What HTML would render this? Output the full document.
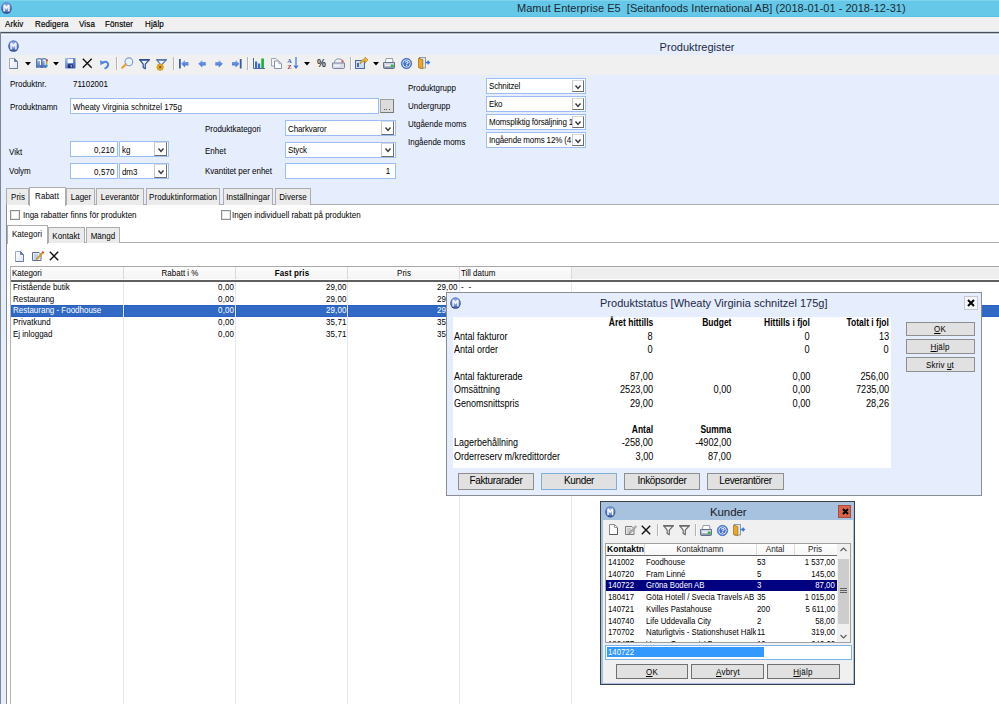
<!DOCTYPE html><html><head><meta charset="utf-8"><style>
html,body{margin:0;padding:0;width:999px;height:704px;overflow:hidden;background:#e6edfd;}
body{position:relative;font-family:"Liberation Sans", sans-serif;}
.t{position:absolute;line-height:1;white-space:pre;}
.r{position:absolute;box-sizing:border-box;}
svg{position:absolute;overflow:visible;}
</style></head><body>
<div class="r" style="left:0px;top:0px;width:999px;height:17px;background:#66c8e8;"></div>
<div class="r" style="left:0px;top:0px;width:999px;height:1px;background:#7fd2ee;"></div>
<div class="r" style="left:0px;top:16px;width:999px;height:1px;background:#58c2e6;"></div>
<svg style="left:1.0px;top:1.9499999999999993px" width="11.0" height="12.100000000000001" viewBox="0 0 20 22"><defs><radialGradient id="mg" cx="50%" cy="40%" r="60%"><stop offset="0" stop-color="#c8d8f4"/><stop offset="0.6" stop-color="#5f82c8"/><stop offset="1" stop-color="#22357e"/></radialGradient></defs><ellipse cx="10" cy="11" rx="9.6" ry="10.6" fill="url(#mg)"/><path d="M4.3 17.5 V7 Q4.3 4.2 7 4.5 L10 9.5 L13 4.5 Q15.7 4.2 15.7 7 V17.5 H13 V9.5 L10 13.5 L7 9.5 V17.5 Z" fill="#f4f7fd"/></svg>
<div class="t" style="left:517.00px;top:3.00px;font-size:11px;letter-spacing:0.02px;color:#1b2a33;">Mamut Enterprise E5  [Seitanfoods International AB] (2018-01-01 - 2018-12-31)</div>
<div class="r" style="left:0px;top:17px;width:999px;height:15px;background:#f0f0f0;"></div>
<div class="t" style="left:4.50px;top:19.00px;font-size:9.5px;letter-spacing:0.1785714285714286px;color:#000;transform:scaleX(0.84);transform-origin:left 0;-webkit-text-stroke:0.2px #000;">Arkiv</div>
<div class="t" style="left:34.80px;top:19.00px;font-size:9.5px;letter-spacing:0.1785714285714286px;color:#000;transform:scaleX(0.84);transform-origin:left 0;-webkit-text-stroke:0.2px #000;">Redigera</div>
<div class="t" style="left:79.30px;top:19.00px;font-size:9.5px;letter-spacing:0.1785714285714286px;color:#000;transform:scaleX(0.84);transform-origin:left 0;-webkit-text-stroke:0.2px #000;">Visa</div>
<div class="t" style="left:105.40px;top:19.00px;font-size:9.5px;letter-spacing:0.1785714285714286px;color:#000;transform:scaleX(0.84);transform-origin:left 0;-webkit-text-stroke:0.2px #000;">Fönster</div>
<div class="t" style="left:145.00px;top:19.00px;font-size:9.5px;letter-spacing:0.1785714285714286px;color:#000;transform:scaleX(0.84);transform-origin:left 0;-webkit-text-stroke:0.2px #000;">Hjälp</div>
<div class="r" style="left:0px;top:31px;width:999px;height:1px;background:#cfdde6;"></div>
<div class="r" style="left:0px;top:32px;width:999px;height:1px;background:#44525c;"></div>
<div class="r" style="left:0px;top:33px;width:999px;height:1px;background:#b4bcc6;"></div>
<div class="r" style="left:0px;top:34px;width:999px;height:1px;background:#f4fbff;"></div>
<div class="r" style="left:0px;top:32px;width:1px;height:672px;background:#7c8894;"></div>
<svg style="left:7.5px;top:40.45px" width="11.0" height="12.100000000000001" viewBox="0 0 20 22"><defs><radialGradient id="mg" cx="50%" cy="40%" r="60%"><stop offset="0" stop-color="#c8d8f4"/><stop offset="0.6" stop-color="#5f82c8"/><stop offset="1" stop-color="#22357e"/></radialGradient></defs><ellipse cx="10" cy="11" rx="9.6" ry="10.6" fill="url(#mg)"/><path d="M4.3 17.5 V7 Q4.3 4.2 7 4.5 L10 9.5 L13 4.5 Q15.7 4.2 15.7 7 V17.5 H13 V9.5 L10 13.5 L7 9.5 V17.5 Z" fill="#f4f7fd"/></svg>
<div class="t" style="left:659.60px;top:42.00px;font-size:11px;letter-spacing:0.02px;color:#1b2a44;">Produktregister</div>
<div class="r" style="left:6px;top:55px;width:993px;height:20px;background:#f0f0f0;"></div>
<svg style="left:9px;top:58px" width="10" height="11" viewBox="0 0 10 11"><defs><linearGradient id="nd" x1="0" y1="0" x2="1" y2="1"><stop offset="0" stop-color="#ffffff"/><stop offset="1" stop-color="#dfe6f2"/></linearGradient></defs><path d="M0.5 0.5 H5.5 L8.5 3.5 V10.5 H0.5 Z" fill="url(#nd)" stroke="#9aabc6"/><path d="M5.5 0.5 V3.5 H8.5 Z" fill="#6a80a8" stroke="#5a7098" stroke-width="0.8"/><path d="M0.5 10.5 H8.5 V4" fill="none" stroke="#6b7d9b"/></svg>
<svg style="left:25px;top:62px" width="6" height="4" viewBox="0 0 6 4"><path d="M0 0 H6 L3 3.5 Z" fill="#000"/></svg>
<svg style="left:36px;top:58px" width="12" height="10" viewBox="0 0 12 10"><defs><linearGradient id="bk" x1="0" y1="0" x2="0" y2="1"><stop offset="0" stop-color="#b9cdf0"/><stop offset="1" stop-color="#4a6cb8"/></linearGradient></defs><path d="M0.5 1 Q3 0 5.8 1 V9.5 Q3 8.7 0.5 9.5 Z" fill="url(#bk)" stroke="#3e5fa0" stroke-width="0.8"/><path d="M5.8 1 Q8 0 10.3 1 V9.5 Q8 8.7 5.8 9.5 Z" fill="url(#bk)" stroke="#3e5fa0" stroke-width="0.8"/><path d="M2 2.5 Q3 2 4.5 2.5 V7 M7 2.5 Q8 2 9.2 2.5 V7" fill="none" stroke="#f4f8ff" stroke-width="1.1"/><rect x="10.5" y="1.5" width="1.5" height="1.8" fill="#e03030"/><rect x="10.5" y="4.3" width="1.5" height="1.8" fill="#e8d820"/><rect x="10.5" y="6.8" width="1.5" height="1.8" fill="#20c8d8"/></svg>
<svg style="left:53px;top:62px" width="6" height="4" viewBox="0 0 6 4"><path d="M0 0 H6 L3 3.5 Z" fill="#000"/></svg>
<svg style="left:65px;top:58px" width="11" height="11" viewBox="0 0 11 11"><defs><linearGradient id="sv" x1="0" y1="0" x2="1" y2="1"><stop offset="0" stop-color="#a8c0f0"/><stop offset="1" stop-color="#2f56a8"/></linearGradient></defs><rect x="0" y="0" width="10.5" height="10.5" rx="0.8" fill="url(#sv)"/><rect x="2.5" y="1" width="5.5" height="4" fill="#f4f6fb"/><rect x="2.8" y="6.3" width="5" height="3.7" fill="#1d2f6a"/><rect x="5.5" y="7" width="1.5" height="2.3" fill="#8aa0d0"/></svg>
<svg style="left:82px;top:58px" width="10.5" height="10.5" viewBox="0 0 10.5 10.5"><path d="M0.8 0.8 L9.7 9.7 M9.7 0.8 L0.8 9.7" stroke="#111" stroke-width="1.4"/></svg>
<svg style="left:100px;top:58.5px" width="9" height="10" viewBox="0 0 9 10"><path d="M2.5 3.8 Q6.8 1.5 8 4.6 Q8.5 8.2 4.5 9.6" fill="none" stroke="#4d86dc" stroke-width="2"/><path d="M0 1.2 L0.6 6.3 L4.8 3.4 Z" fill="#4d86dc"/></svg>
<div class="r" style="left:116px;top:57px;width:1px;height:13px;background:#b4b4b4;"></div>
<div class="r" style="left:117px;top:57px;width:1px;height:13px;background:#fafafa;"></div>
<svg style="left:121px;top:57px" width="12" height="12" viewBox="0 0 12 12"><circle cx="7.9" cy="4.8" r="3.9" fill="#e4f4fa" stroke="#7e9ccc" stroke-width="1.1"/><path d="M1.2 10.8 L5 7.2" stroke="#e89a3a" stroke-width="2" stroke-linecap="round"/></svg>
<svg style="left:139px;top:58.5px" width="11" height="11" viewBox="0 0 11 11"><path d="M0.6 0.6 H10.4 L6.3 5.2 V9.8 L4.2 8.6 V5.2 Z" fill="#eef4fc" stroke="#2d4f8e" stroke-width="1.2" stroke-linejoin="round"/><path d="M0.6 0.9 H10.4" stroke="#2d4f8e" stroke-width="1.6"/></svg>
<svg style="left:156px;top:58.5px" width="11" height="11" viewBox="0 0 11 11"><path d="M0.6 0.6 H10.4 L6.3 5.2 V9.8 L4.2 8.6 V5.2 Z" fill="#eef4fc" stroke="#5a78a8" stroke-width="1.2" stroke-linejoin="round"/><path d="M0.6 0.9 H10.4" stroke="#5a78a8" stroke-width="1.6"/><g transform="translate(4.2 8.2)"><circle r="3" fill="#e8b81c" stroke="#a87a10" stroke-width="0.6"/><path d="M-3.8 0 H3.8 M0 -3.8 V3.8 M-2.7 -2.7 L2.7 2.7 M-2.7 2.7 L2.7 -2.7" stroke="#e0a818" stroke-width="1.4"/><circle r="1.1" fill="#7a5410"/></g></svg>
<div class="r" style="left:173px;top:57px;width:1px;height:13px;background:#b4b4b4;"></div>
<div class="r" style="left:174px;top:57px;width:1px;height:13px;background:#fafafa;"></div>
<svg style="left:179px;top:58.5px" width="10" height="10" viewBox="0 0 10 10"><defs><linearGradient id="nv" x1="0" y1="0" x2="0" y2="1"><stop offset="0" stop-color="#86aef0"/><stop offset="1" stop-color="#3a68cc"/></linearGradient></defs><rect x="0" y="0" width="1.8" height="9.5" fill="#3a5c9c"/><path d="M2.2 4.7 L6 1 V3 H9.5 V6.5 H6 V8.5 Z" fill="url(#nv)"/></svg>
<svg style="left:197.5px;top:59px" width="10" height="10" viewBox="0 0 10 10"><defs><linearGradient id="nv" x1="0" y1="0" x2="0" y2="1"><stop offset="0" stop-color="#86aef0"/><stop offset="1" stop-color="#3a68cc"/></linearGradient></defs><path d="M0.3 4.7 L4.3 1 V3 H7.8 V6.5 H4.3 V8.5 Z" fill="url(#nv)"/></svg>
<svg style="left:214.7px;top:59px" width="10" height="10" viewBox="0 0 10 10"><defs><linearGradient id="nv" x1="0" y1="0" x2="0" y2="1"><stop offset="0" stop-color="#86aef0"/><stop offset="1" stop-color="#3a68cc"/></linearGradient></defs><path d="M7.8 4.7 L3.8 1 V3 H0.3 V6.5 H3.8 V8.5 Z" fill="url(#nv)"/></svg>
<svg style="left:231.5px;top:58.5px" width="10" height="10" viewBox="0 0 10 10"><defs><linearGradient id="nv" x1="0" y1="0" x2="0" y2="1"><stop offset="0" stop-color="#86aef0"/><stop offset="1" stop-color="#3a68cc"/></linearGradient></defs><rect x="7.8" y="0" width="1.8" height="9.5" fill="#3a5c9c"/><path d="M7.4 4.7 L3.6 1 V3 H0 V6.5 H3.6 V8.5 Z" fill="url(#nv)"/></svg>
<div class="r" style="left:247px;top:57px;width:1px;height:13px;background:#b4b4b4;"></div>
<div class="r" style="left:248px;top:57px;width:1px;height:13px;background:#fafafa;"></div>
<svg style="left:253px;top:58px" width="12" height="11" viewBox="0 0 12 11"><path d="M0.5 0 V10.5 H12" fill="none" stroke="#4a6aa8"/><rect x="2" y="3.5" width="2.2" height="6.5" fill="#3a6ad0"/><rect x="5" y="5.5" width="2.2" height="4.5" fill="#3a6ad0"/><rect x="8.3" y="0.5" width="2.6" height="9.5" fill="#18b030"/></svg>
<svg style="left:271px;top:58px" width="11" height="11" viewBox="0 0 11 11"><path d="M0.5 0.5 H5 L7 2.5 V8 H0.5 Z" fill="#f4f6fa" stroke="#9aa4b8"/><path d="M3.5 3 H7.8 L10.5 5.7 V10.5 H3.5 Z" fill="#fbfcfe" stroke="#8a94a8"/><path d="M7.8 3 V5.7 H10.5" fill="#c0c8d8" stroke="#8a94a8" stroke-width="0.6"/></svg>
<svg style="left:287px;top:57px" width="12" height="12" viewBox="0 0 12 12"><text x="0.2" y="5.6" font-size="6.2" font-family="Liberation Serif" fill="#3a60b8" font-weight="bold">A</text><text x="0.5" y="11.8" font-size="6.2" font-family="Liberation Serif" fill="#a83030" font-weight="bold">Z</text><path d="M9 0 V11 M7 8.5 L9 11 L11 8.5" fill="none" stroke="#3a70d8" stroke-width="1.2"/></svg>
<svg style="left:304px;top:62px" width="6" height="4" viewBox="0 0 6 4"><path d="M0 0 H6 L3 3.5 Z" fill="#000"/></svg>
<svg style="left:317px;top:58px" width="9" height="10" viewBox="0 0 9 10"><text x="0" y="9" font-size="10" font-family="Liberation Sans" fill="#333" font-weight="bold" letter-spacing="-0.5">%</text></svg>
<svg style="left:332px;top:58px" width="13" height="11" viewBox="0 0 13 11"><path d="M2.5 5 Q2.5 0.8 7 0.8 Q11 0.8 11 4.5" fill="#f0f2f6" stroke="#8a94a8"/><path d="M0.5 5 H12.5 V9.5 Q12.5 10.5 11.5 10.5 H1.5 Q0.5 10.5 0.5 9.5 Z" fill="#d8dde8" stroke="#7a849a"/><rect x="9.5" y="2.5" width="2" height="1.8" fill="#e04040"/><path d="M2 7.5 H8" stroke="#f8f8fc" stroke-width="1.2"/></svg>
<div class="r" style="left:349.5px;top:57px;width:1.0px;height:13px;background:#b4b4b4;"></div>
<div class="r" style="left:350.5px;top:57px;width:1.0px;height:13px;background:#fafafa;"></div>
<svg style="left:355px;top:57px" width="13" height="12" viewBox="0 0 13 12"><rect x="0.5" y="3.5" width="9" height="8" fill="#cfdcf0" stroke="#4a6aa8"/><rect x="2" y="6" width="2" height="4" fill="#4a6aa8"/><path d="M5 7 Q6 2 10 2 V0 L13 3 L10 6 V4 Q7 4 5 7 Z" fill="#f0b830" stroke="#b07810" stroke-width="0.6"/></svg>
<svg style="left:372.5px;top:62px" width="6" height="4" viewBox="0 0 6 4"><path d="M0 0 H6 L3 3.5 Z" fill="#000"/></svg>
<svg style="left:383px;top:58px" width="12" height="11" viewBox="0 0 12 11"><defs><linearGradient id="pr" x1="0" y1="0" x2="0" y2="1"><stop offset="0" stop-color="#dfe6f0"/><stop offset="1" stop-color="#7d8ca8"/></linearGradient></defs><path d="M3 0.5 H9.5 L10 4.5 H2.5 Z" fill="#fff" stroke="#7a88a0" stroke-width="0.8"/><path d="M0.5 4.5 H11.5 V9.5 Q11.5 10.5 10.5 10.5 H1.5 Q0.5 10.5 0.5 9.5 Z" fill="url(#pr)" stroke="#56647e" stroke-width="0.9"/><rect x="2" y="6.5" width="5.5" height="1.6" fill="#f4f6fa"/><rect x="8" y="6.8" width="2.4" height="2" fill="#18c018"/></svg>
<svg style="left:401px;top:58px" width="11" height="11" viewBox="0 0 11 11"><circle cx="5.5" cy="5.5" r="5.2" fill="#5a86da" stroke="#3a62c0" stroke-width="0.7"/><circle cx="5.5" cy="5.5" r="3.7" fill="#3f6cc8" stroke="#dce8fb" stroke-width="0.9"/><text x="5.6" y="8.3" text-anchor="middle" font-size="7" font-weight="bold" font-family="Liberation Sans" fill="#fff">?</text></svg>
<svg style="left:418px;top:57px" width="12" height="12" viewBox="0 0 12 12"><rect x="1.5" y="0.5" width="6" height="10.5" fill="#e4e8ee" stroke="#7a8494" stroke-width="0.8"/><path d="M0.5 1.2 L4.8 2.6 V11.8 L0.5 10.5 Z" fill="#e8a828" stroke="#a06c10" stroke-width="0.7"/><path d="M7.5 5.5 H11 M9.6 3.8 L11.3 5.5 L9.6 7.2" fill="none" stroke="#3a78e0" stroke-width="1.4"/></svg>
<div class="t" style="left:9.80px;top:79.00px;font-size:9.5px;letter-spacing:0.0px;color:#000;transform:scaleX(0.84);transform-origin:left 0;">Produktnr.</div>
<div class="t" style="left:72.90px;top:79.00px;font-size:9.5px;letter-spacing:0.0px;color:#000;transform:scaleX(0.84);transform-origin:left 0;">71102001</div>
<div class="t" style="left:9.80px;top:102.00px;font-size:9.5px;letter-spacing:0.0px;color:#000;transform:scaleX(0.84);transform-origin:left 0;">Produktnamn</div>
<div class="r" style="left:70px;top:98px;width:309px;height:16px;background:#fff;border:1px solid #9dbef2;"></div>
<div class="t" style="left:73.30px;top:102.00px;font-size:9.5px;letter-spacing:0.0px;color:#000;transform:scaleX(0.84);transform-origin:left 0;">Wheaty Virginia schnitzel 175g</div>
<div class="r" style="left:380px;top:99px;width:14px;height:14px;background:#dcdcdc;border:1px solid #7a7a7a;border-top-color:#a0a0a0;border-left-color:#a0a0a0;"></div>
<div class="r" style="left:383.5px;top:108.5px;width:1.1999999999999886px;height:1.5px;background:#555;"></div>
<div class="r" style="left:386px;top:108.5px;width:1.1999999999999886px;height:1.5px;background:#555;"></div>
<div class="r" style="left:388.5px;top:108.5px;width:1.1999999999999886px;height:1.5px;background:#555;"></div>
<div class="t" style="left:204.70px;top:124.00px;font-size:9.5px;letter-spacing:0.0px;color:#000;transform:scaleX(0.84);transform-origin:left 0;">Produktkategori</div>
<div class="r" style="left:285px;top:120px;width:111px;height:16px;background:#fff;border:1px solid #9dbef2;"></div>
<div class="r" style="left:381px;top:121px;width:13px;height:14px;background:#fff;border-left:1px solid #c8c8c8;border-top:1px solid #d8d8d8;border-right:1px solid #6e6e6e;border-bottom:1px solid #6e6e6e;"></div>
<svg style="left:384.5px;top:126.7px" width="6" height="4.5" viewBox="0 0 6 4.5"><path d="M0.5 0.5 L3 3.5 L5.5 0.5" fill="none" stroke="#3a3a3a" stroke-width="1.4"/></svg>
<div class="t" style="left:288.20px;top:124.00px;font-size:9.5px;letter-spacing:-0.1190476190476191px;color:#000;transform:scaleX(0.84);transform-origin:left 0;">Charkvaror</div>
<div class="t" style="left:204.70px;top:146.00px;font-size:9.5px;letter-spacing:0.0px;color:#000;transform:scaleX(0.84);transform-origin:left 0;">Enhet</div>
<div class="r" style="left:285px;top:141.5px;width:111px;height:16.0px;background:#fff;border:1px solid #9dbef2;"></div>
<div class="r" style="left:381px;top:142.5px;width:13px;height:14.0px;background:#fff;border-left:1px solid #c8c8c8;border-top:1px solid #d8d8d8;border-right:1px solid #6e6e6e;border-bottom:1px solid #6e6e6e;"></div>
<svg style="left:384.5px;top:148.2px" width="6" height="4.5" viewBox="0 0 6 4.5"><path d="M0.5 0.5 L3 3.5 L5.5 0.5" fill="none" stroke="#3a3a3a" stroke-width="1.4"/></svg>
<div class="t" style="left:288.20px;top:145.00px;font-size:9.5px;letter-spacing:-0.1190476190476191px;color:#000;transform:scaleX(0.84);transform-origin:left 0;">Styck</div>
<div class="t" style="left:204.70px;top:166.00px;font-size:9.5px;letter-spacing:0.0px;color:#000;transform:scaleX(0.84);transform-origin:left 0;">Kvantitet per enhet</div>
<div class="r" style="left:285px;top:163px;width:111px;height:16px;background:#fff;border:1px solid #9dbef2;"></div>
<div class="t" style="right:608.50px;top:166.00px;font-size:9.5px;letter-spacing:0.0px;color:#000;transform:scaleX(0.84);transform-origin:right 0;">1</div>
<div class="t" style="left:9.40px;top:147.00px;font-size:9.5px;letter-spacing:0.0px;color:#000;transform:scaleX(0.84);transform-origin:left 0;">Vikt</div>
<div class="r" style="left:70px;top:141px;width:48px;height:16px;background:#fff;border:1px solid #9dbef2;"></div>
<div class="t" style="right:884.00px;top:145.00px;font-size:9.5px;letter-spacing:0.1785714285714286px;color:#000;transform:scaleX(0.84);transform-origin:right 0;">0,210</div>
<div class="r" style="left:119px;top:141px;width:50px;height:16px;background:#fff;border:1px solid #9dbef2;"></div>
<div class="r" style="left:154px;top:142px;width:13px;height:14px;background:#fff;border-left:1px solid #c8c8c8;border-top:1px solid #d8d8d8;border-right:1px solid #6e6e6e;border-bottom:1px solid #6e6e6e;"></div>
<svg style="left:157.5px;top:147.7px" width="6" height="4.5" viewBox="0 0 6 4.5"><path d="M0.5 0.5 L3 3.5 L5.5 0.5" fill="none" stroke="#3a3a3a" stroke-width="1.4"/></svg>
<div class="t" style="left:122.20px;top:145.00px;font-size:9.5px;letter-spacing:-0.1190476190476191px;color:#000;transform:scaleX(0.84);transform-origin:left 0;">kg</div>
<div class="t" style="left:9.40px;top:166.00px;font-size:9.5px;letter-spacing:0.0px;color:#000;transform:scaleX(0.84);transform-origin:left 0;">Volym</div>
<div class="r" style="left:70px;top:163px;width:48px;height:16px;background:#fff;border:1px solid #9dbef2;"></div>
<div class="t" style="right:884.00px;top:167.00px;font-size:9.5px;letter-spacing:0.1785714285714286px;color:#000;transform:scaleX(0.84);transform-origin:right 0;">0,570</div>
<div class="r" style="left:119px;top:163px;width:50px;height:16px;background:#fff;border:1px solid #9dbef2;"></div>
<div class="r" style="left:154px;top:164px;width:13px;height:14px;background:#fff;border-left:1px solid #c8c8c8;border-top:1px solid #d8d8d8;border-right:1px solid #6e6e6e;border-bottom:1px solid #6e6e6e;"></div>
<svg style="left:157.5px;top:169.7px" width="6" height="4.5" viewBox="0 0 6 4.5"><path d="M0.5 0.5 L3 3.5 L5.5 0.5" fill="none" stroke="#3a3a3a" stroke-width="1.4"/></svg>
<div class="t" style="left:122.20px;top:167.00px;font-size:9.5px;letter-spacing:-0.1190476190476191px;color:#000;transform:scaleX(0.84);transform-origin:left 0;">dm3</div>
<div class="t" style="left:408.40px;top:83.00px;font-size:9.5px;letter-spacing:0.0px;color:#000;transform:scaleX(0.84);transform-origin:left 0;">Produktgrupp</div>
<div class="r" style="left:486px;top:78px;width:100px;height:16px;background:#fff;border:1px solid #9dbef2;"></div>
<div class="t" style="left:489.20px;top:81.00px;font-size:9.5px;letter-spacing:-0.1547619047619047px;color:#000;transform:scaleX(0.84);transform-origin:left 0;">Schnitzel</div>
<div class="r" style="left:572px;top:80px;width:12px;height:12px;background:#fff;border-left:1px solid #c8c8c8;border-top:1px solid #d8d8d8;border-right:1px solid #6e6e6e;border-bottom:1px solid #6e6e6e;"></div>
<svg style="left:575.0px;top:84.7px" width="6" height="4.5" viewBox="0 0 6 4.5"><path d="M0.5 0.5 L3 3.5 L5.5 0.5" fill="none" stroke="#3a3a3a" stroke-width="1.4"/></svg>
<div class="t" style="left:408.40px;top:101.00px;font-size:9.5px;letter-spacing:0.0px;color:#000;transform:scaleX(0.84);transform-origin:left 0;">Undergrupp</div>
<div class="r" style="left:486px;top:96px;width:100px;height:16px;background:#fff;border:1px solid #9dbef2;"></div>
<div class="t" style="left:489.20px;top:99.00px;font-size:9.5px;letter-spacing:-0.1547619047619047px;color:#000;transform:scaleX(0.84);transform-origin:left 0;">Eko</div>
<div class="r" style="left:572px;top:98px;width:12px;height:12px;background:#fff;border-left:1px solid #c8c8c8;border-top:1px solid #d8d8d8;border-right:1px solid #6e6e6e;border-bottom:1px solid #6e6e6e;"></div>
<svg style="left:575.0px;top:102.7px" width="6" height="4.5" viewBox="0 0 6 4.5"><path d="M0.5 0.5 L3 3.5 L5.5 0.5" fill="none" stroke="#3a3a3a" stroke-width="1.4"/></svg>
<div class="t" style="left:408.40px;top:119.00px;font-size:9.5px;letter-spacing:0.0px;color:#000;transform:scaleX(0.84);transform-origin:left 0;">Utgående moms</div>
<div class="r" style="left:486px;top:114px;width:100px;height:16px;background:#fff;border:1px solid #9dbef2;"></div>
<div class="t" style="left:489.20px;top:117.00px;font-size:9.5px;letter-spacing:-0.1547619047619047px;color:#000;transform:scaleX(0.84);transform-origin:left 0;">Momspliktig försäljning 1</div>
<div class="r" style="left:572px;top:116px;width:12px;height:12px;background:#fff;border-left:1px solid #c8c8c8;border-top:1px solid #d8d8d8;border-right:1px solid #6e6e6e;border-bottom:1px solid #6e6e6e;"></div>
<svg style="left:575.0px;top:120.7px" width="6" height="4.5" viewBox="0 0 6 4.5"><path d="M0.5 0.5 L3 3.5 L5.5 0.5" fill="none" stroke="#3a3a3a" stroke-width="1.4"/></svg>
<div class="t" style="left:408.40px;top:137.00px;font-size:9.5px;letter-spacing:0.0px;color:#000;transform:scaleX(0.84);transform-origin:left 0;">Ingående moms</div>
<div class="r" style="left:486px;top:132px;width:100px;height:16px;background:#fff;border:1px solid #9dbef2;"></div>
<div class="t" style="left:489.20px;top:135.00px;font-size:9.5px;letter-spacing:-0.1547619047619047px;color:#000;transform:scaleX(0.84);transform-origin:left 0;">Ingående moms 12% (4</div>
<div class="r" style="left:572px;top:134px;width:12px;height:12px;background:#fff;border-left:1px solid #c8c8c8;border-top:1px solid #d8d8d8;border-right:1px solid #6e6e6e;border-bottom:1px solid #6e6e6e;"></div>
<svg style="left:575.0px;top:138.7px" width="6" height="4.5" viewBox="0 0 6 4.5"><path d="M0.5 0.5 L3 3.5 L5.5 0.5" fill="none" stroke="#3a3a3a" stroke-width="1.4"/></svg>
<div class="r" style="left:6px;top:204px;width:993px;height:500px;background:#fff;border-left:1px solid #8c8c8c;border-top:1px solid #adadad;"></div>
<div class="r" style="left:6px;top:188px;width:23px;height:17px;background:#ebebeb;border:1px solid #adadad;border-bottom:none;"></div>
<div class="t" style="left:-182.50px;width:400px;text-align:center;top:192.00px;font-size:9.5px;letter-spacing:0.059523809523809514px;color:#000;transform:scaleX(0.84);transform-origin:center 0;">Pris</div>
<div class="r" style="left:66px;top:188px;width:29px;height:17px;background:#ebebeb;border:1px solid #adadad;border-bottom:none;"></div>
<div class="t" style="left:-119.50px;width:400px;text-align:center;top:192.00px;font-size:9.5px;letter-spacing:0.059523809523809514px;color:#000;transform:scaleX(0.84);transform-origin:center 0;">Lager</div>
<div class="r" style="left:96px;top:188px;width:48px;height:17px;background:#ebebeb;border:1px solid #adadad;border-bottom:none;"></div>
<div class="t" style="left:-80.00px;width:400px;text-align:center;top:192.00px;font-size:9.5px;letter-spacing:0.059523809523809514px;color:#000;transform:scaleX(0.84);transform-origin:center 0;">Leverantör</div>
<div class="r" style="left:145.5px;top:188px;width:74.5px;height:17px;background:#ebebeb;border:1px solid #adadad;border-bottom:none;"></div>
<div class="t" style="left:-17.25px;width:400px;text-align:center;top:192.00px;font-size:9.5px;letter-spacing:0.059523809523809514px;color:#000;transform:scaleX(0.84);transform-origin:center 0;">Produktinformation</div>
<div class="r" style="left:222.5px;top:188px;width:50.5px;height:17px;background:#ebebeb;border:1px solid #adadad;border-bottom:none;"></div>
<div class="t" style="left:47.75px;width:400px;text-align:center;top:192.00px;font-size:9.5px;letter-spacing:0.059523809523809514px;color:#000;transform:scaleX(0.84);transform-origin:center 0;">Inställningar</div>
<div class="r" style="left:274.5px;top:188px;width:36.5px;height:17px;background:#ebebeb;border:1px solid #adadad;border-bottom:none;"></div>
<div class="t" style="left:92.75px;width:400px;text-align:center;top:192.00px;font-size:9.5px;letter-spacing:0.059523809523809514px;color:#000;transform:scaleX(0.84);transform-origin:center 0;">Diverse</div>
<div class="r" style="left:28.5px;top:186.5px;width:37.0px;height:19.5px;background:#fff;border:1px solid #adadad;border-bottom:none;"></div>
<div class="t" style="left:-153.00px;width:400px;text-align:center;top:191.00px;font-size:9.5px;letter-spacing:0.059523809523809514px;color:#000;transform:scaleX(0.84);transform-origin:center 0;">Rabatt</div>
<div class="r" style="left:10px;top:210px;width:10px;height:10px;background:#fff;border:1px solid #8e8f8f;"></div>
<div class="r" style="left:11px;top:211px;width:8px;height:8px;border:1px solid #e6e6e6;"></div>
<div class="t" style="left:22.50px;top:210.00px;font-size:9.5px;letter-spacing:0.0px;color:#000;transform:scaleX(0.84);transform-origin:left 0;">Inga rabatter finns för produkten</div>
<div class="r" style="left:220.5px;top:210px;width:10.0px;height:10px;background:#fff;border:1px solid #8e8f8f;"></div>
<div class="r" style="left:221.5px;top:211px;width:8.0px;height:8px;border:1px solid #e6e6e6;"></div>
<div class="t" style="left:232.40px;top:210.00px;font-size:9.5px;letter-spacing:0.0px;color:#000;transform:scaleX(0.84);transform-origin:left 0;">Ingen individuell rabatt på produkten</div>
<div class="r" style="left:7px;top:242px;width:992px;height:1px;background:#adadad;"></div>
<div class="r" style="left:47.5px;top:227.3px;width:37.5px;height:15.699999999999989px;background:#ebebeb;border:1px solid #adadad;border-bottom:none;"></div>
<div class="t" style="left:-133.75px;width:400px;text-align:center;top:231.00px;font-size:9.5px;letter-spacing:0.059523809523809514px;color:#000;transform:scaleX(0.84);transform-origin:center 0;">Kontakt</div>
<div class="r" style="left:86px;top:227.3px;width:34px;height:15.699999999999989px;background:#ebebeb;border:1px solid #adadad;border-bottom:none;"></div>
<div class="t" style="left:-97.00px;width:400px;text-align:center;top:231.00px;font-size:9.5px;letter-spacing:0.059523809523809514px;color:#000;transform:scaleX(0.84);transform-origin:center 0;">Mängd</div>
<div class="r" style="left:6.5px;top:225px;width:41.0px;height:18.5px;background:#fff;border:1px solid #adadad;border-bottom:none;"></div>
<div class="t" style="left:-173.00px;width:400px;text-align:center;top:229.00px;font-size:9.5px;letter-spacing:0.059523809523809514px;color:#000;transform:scaleX(0.84);transform-origin:center 0;">Kategori</div>
<svg style="left:14.5px;top:250.5px" width="10" height="11" viewBox="0 0 10 11"><defs><linearGradient id="nd" x1="0" y1="0" x2="1" y2="1"><stop offset="0" stop-color="#ffffff"/><stop offset="1" stop-color="#dfe6f2"/></linearGradient></defs><path d="M0.5 0.5 H5.5 L8.5 3.5 V10.5 H0.5 Z" fill="url(#nd)" stroke="#9aabc6"/><path d="M5.5 0.5 V3.5 H8.5 Z" fill="#6a80a8" stroke="#5a7098" stroke-width="0.8"/><path d="M0.5 10.5 H8.5 V4" fill="none" stroke="#6b7d9b"/></svg>
<svg style="left:32px;top:250.5px" width="12" height="10" viewBox="0 0 12 10"><path d="M0.5 1.5 H7 L9 3.5 V9.5 H0.5 Z" fill="#e8eef8" stroke="#5a7098"/><path d="M2 4 H6 M2 6 H7 M2 8 H5" stroke="#8aa0c0" stroke-width="0.8"/><path d="M4 8 L10.5 0.8 L11.5 1.8 L5 8.8 Z" fill="#f0b020" stroke="#a06010" stroke-width="0.5"/><path d="M10.3 0.5 L11.8 2" stroke="#e03030" stroke-width="1.2"/></svg>
<svg style="left:48.5px;top:250.5px" width="10" height="10" viewBox="0 0 10 10"><path d="M0.8 0.8 L9.2 9.2 M9.2 0.8 L0.8 9.2" stroke="#111" stroke-width="1.4"/></svg>
<div class="r" style="left:10px;top:266px;width:989px;height:438px;background:#fff;border-left:1px solid #b4b4b4;border-top:1px solid #a8a8a8;"></div>
<div class="r" style="left:11px;top:267px;width:560px;height:12px;background:linear-gradient(#fcfcfc,#f5f5f5);"></div>
<div class="r" style="left:571px;top:267px;width:428px;height:12px;background:#efefef;"></div>
<div class="r" style="left:11px;top:280px;width:988px;height:2px;background:#606060;"></div>
<div class="r" style="left:11px;top:305px;width:112px;height:12px;background:#316ac5;border:1px solid #2a60c2;border-right:none;"></div>
<div class="r" style="left:124px;top:305px;width:111px;height:12px;background:#316ac5;border:1px solid #2a60c2;border-right:none;"></div>
<div class="r" style="left:236px;top:305px;width:111px;height:12px;background:#316ac5;border:1px solid #2a60c2;border-right:none;"></div>
<div class="r" style="left:348px;top:305px;width:111px;height:12px;background:#316ac5;border:1px solid #2a60c2;border-right:none;"></div>
<div class="r" style="left:460px;top:305px;width:111px;height:12px;background:#316ac5;border:1px solid #2a60c2;border-right:none;"></div>
<div class="r" style="left:572px;top:305px;width:427px;height:12px;background:#316ac5;border:1px solid #2a60c2;border-right:none;"></div>
<div class="r" style="left:123px;top:267px;width:1px;height:12px;background:#dadada;"></div>
<div class="r" style="left:123px;top:282px;width:1px;height:422px;background:#dfe7f8;"></div>
<div class="r" style="left:235px;top:267px;width:1px;height:12px;background:#dadada;"></div>
<div class="r" style="left:235px;top:282px;width:1px;height:422px;background:#dfe7f8;"></div>
<div class="r" style="left:347px;top:267px;width:1px;height:12px;background:#dadada;"></div>
<div class="r" style="left:347px;top:282px;width:1px;height:422px;background:#dfe7f8;"></div>
<div class="r" style="left:459px;top:267px;width:1px;height:12px;background:#dadada;"></div>
<div class="r" style="left:459px;top:282px;width:1px;height:422px;background:#dfe7f8;"></div>
<div class="r" style="left:571px;top:267px;width:1px;height:12px;background:#dadada;"></div>
<div class="r" style="left:571px;top:282px;width:1px;height:422px;background:#dfe7f8;"></div>
<div class="t" style="left:11.90px;top:268.00px;font-size:9.5px;letter-spacing:0.0px;color:#000;transform:scaleX(0.84);transform-origin:left 0;">Kategori</div>
<div class="t" style="left:-20.50px;width:400px;text-align:center;top:268.00px;font-size:9.5px;letter-spacing:0.0px;color:#000;transform:scaleX(0.84);transform-origin:center 0;">Rabatt i %</div>
<div class="t" style="left:91.50px;width:400px;text-align:center;top:268.00px;font-size:9.5px;letter-spacing:0.1785714285714286px;color:#000;font-weight:bold;transform:scaleX(0.84);transform-origin:center 0;">Fast pris</div>
<div class="t" style="left:204.00px;width:400px;text-align:center;top:268.00px;font-size:9.5px;letter-spacing:0.0px;color:#000;transform:scaleX(0.84);transform-origin:center 0;">Pris</div>
<div class="t" style="left:460.50px;top:268.00px;font-size:9.5px;letter-spacing:0.0px;color:#000;transform:scaleX(0.84);transform-origin:left 0;">Till datum</div>
<div class="t" style="left:13.30px;top:282.00px;font-size:9.5px;letter-spacing:0.0px;color:#000;transform:scaleX(0.84);transform-origin:left 0;">Fristående butik</div>
<div class="t" style="right:765.00px;top:282.00px;font-size:9.5px;letter-spacing:0.1785714285714286px;color:#000;transform:scaleX(0.84);transform-origin:right 0;">0,00</div>
<div class="t" style="right:652.80px;top:282.00px;font-size:9.5px;letter-spacing:0.1785714285714286px;color:#000;transform:scaleX(0.84);transform-origin:right 0;">29,00</div>
<div class="t" style="right:541.00px;top:282.00px;font-size:9.5px;letter-spacing:0.1785714285714286px;color:#000;transform:scaleX(0.84);transform-origin:right 0;">29,00</div>
<div class="t" style="left:461.00px;top:282.00px;font-size:9.5px;letter-spacing:0.1785714285714286px;color:#000;transform:scaleX(0.84);transform-origin:left 0;">-  -</div>
<div class="t" style="left:13.30px;top:294.00px;font-size:9.5px;letter-spacing:0.0px;color:#000;transform:scaleX(0.84);transform-origin:left 0;">Restaurang</div>
<div class="t" style="right:765.00px;top:294.00px;font-size:9.5px;letter-spacing:0.1785714285714286px;color:#000;transform:scaleX(0.84);transform-origin:right 0;">0,00</div>
<div class="t" style="right:652.80px;top:294.00px;font-size:9.5px;letter-spacing:0.1785714285714286px;color:#000;transform:scaleX(0.84);transform-origin:right 0;">29,00</div>
<div class="t" style="right:541.00px;top:294.00px;font-size:9.5px;letter-spacing:0.1785714285714286px;color:#000;transform:scaleX(0.84);transform-origin:right 0;">29,00</div>
<div class="t" style="left:13.30px;top:305.00px;font-size:9.5px;letter-spacing:0.0px;color:#fff;transform:scaleX(0.84);transform-origin:left 0;">Restaurang - Foodhouse</div>
<div class="t" style="right:765.00px;top:305.00px;font-size:9.5px;letter-spacing:0.1785714285714286px;color:#fff;transform:scaleX(0.84);transform-origin:right 0;">0,00</div>
<div class="t" style="right:652.80px;top:305.00px;font-size:9.5px;letter-spacing:0.1785714285714286px;color:#fff;transform:scaleX(0.84);transform-origin:right 0;">29,00</div>
<div class="t" style="right:541.00px;top:305.00px;font-size:9.5px;letter-spacing:0.1785714285714286px;color:#fff;transform:scaleX(0.84);transform-origin:right 0;">29,00</div>
<div class="t" style="left:13.30px;top:317.00px;font-size:9.5px;letter-spacing:0.0px;color:#000;transform:scaleX(0.84);transform-origin:left 0;">Privatkund</div>
<div class="t" style="right:765.00px;top:317.00px;font-size:9.5px;letter-spacing:0.1785714285714286px;color:#000;transform:scaleX(0.84);transform-origin:right 0;">0,00</div>
<div class="t" style="right:652.80px;top:317.00px;font-size:9.5px;letter-spacing:0.1785714285714286px;color:#000;transform:scaleX(0.84);transform-origin:right 0;">35,71</div>
<div class="t" style="right:541.00px;top:317.00px;font-size:9.5px;letter-spacing:0.1785714285714286px;color:#000;transform:scaleX(0.84);transform-origin:right 0;">35,71</div>
<div class="t" style="left:13.30px;top:329.00px;font-size:9.5px;letter-spacing:0.0px;color:#000;transform:scaleX(0.84);transform-origin:left 0;">Ej inloggad</div>
<div class="t" style="right:765.00px;top:329.00px;font-size:9.5px;letter-spacing:0.1785714285714286px;color:#000;transform:scaleX(0.84);transform-origin:right 0;">0,00</div>
<div class="t" style="right:652.80px;top:329.00px;font-size:9.5px;letter-spacing:0.1785714285714286px;color:#000;transform:scaleX(0.84);transform-origin:right 0;">35,71</div>
<div class="t" style="right:541.00px;top:329.00px;font-size:9.5px;letter-spacing:0.1785714285714286px;color:#000;transform:scaleX(0.84);transform-origin:right 0;">35,71</div>
<div class="r" style="left:446px;top:292px;width:536px;height:204px;background:#e6edfd;border:1px solid #8a8f96;"></div>
<svg style="left:450.0px;top:296.95px" width="11.0" height="12.100000000000001" viewBox="0 0 20 22"><defs><radialGradient id="mg" cx="50%" cy="40%" r="60%"><stop offset="0" stop-color="#c8d8f4"/><stop offset="0.6" stop-color="#5f82c8"/><stop offset="1" stop-color="#22357e"/></radialGradient></defs><ellipse cx="10" cy="11" rx="9.6" ry="10.6" fill="url(#mg)"/><path d="M4.3 17.5 V7 Q4.3 4.2 7 4.5 L10 9.5 L13 4.5 Q15.7 4.2 15.7 7 V17.5 H13 V9.5 L10 13.5 L7 9.5 V17.5 Z" fill="#f4f7fd"/></svg>
<div class="t" style="left:600.00px;top:298.00px;font-size:11px;letter-spacing:0.02px;color:#1b2a44;">Produktstatus [Wheaty Virginia schnitzel 175g]</div>
<div class="r" style="left:963.5px;top:295.5px;width:14.0px;height:14.0px;background:#f4f6fb;border:1px solid #c4c8d0;"></div>
<svg style="left:966.5px;top:298.5px" width="8" height="8" viewBox="0 0 8 8"><path d="M1 1 L7 7 M7 1 L1 7" stroke="#000" stroke-width="2"/></svg>
<div class="r" style="left:453px;top:316.5px;width:438px;height:151.5px;background:#fff;"></div>
<div class="t" style="right:346.00px;top:318.00px;font-size:10px;letter-spacing:0px;color:#000;font-weight:bold;transform:scaleX(0.85);transform-origin:right 0;">Året hittills</div>
<div class="t" style="right:267.70px;top:318.00px;font-size:10px;letter-spacing:0px;color:#000;font-weight:bold;transform:scaleX(0.85);transform-origin:right 0;">Budget</div>
<div class="t" style="right:189.00px;top:318.00px;font-size:10px;letter-spacing:0px;color:#000;font-weight:bold;transform:scaleX(0.85);transform-origin:right 0;">Hittills i fjol</div>
<div class="t" style="right:110.00px;top:318.00px;font-size:10px;letter-spacing:0px;color:#000;font-weight:bold;transform:scaleX(0.85);transform-origin:right 0;">Totalt i fjol</div>
<div class="t" style="left:454.00px;top:332.00px;font-size:10px;letter-spacing:0px;color:#000;transform:scaleX(0.9);transform-origin:left 0;">Antal fakturor</div>
<div class="t" style="right:346.00px;top:332.00px;font-size:10px;letter-spacing:0px;color:#000;transform:scaleX(0.92);transform-origin:right 0;">8</div>
<div class="t" style="right:189.00px;top:332.00px;font-size:10px;letter-spacing:0px;color:#000;transform:scaleX(0.92);transform-origin:right 0;">0</div>
<div class="t" style="right:110.00px;top:332.00px;font-size:10px;letter-spacing:0px;color:#000;transform:scaleX(0.92);transform-origin:right 0;">13</div>
<div class="t" style="left:454.00px;top:345.00px;font-size:10px;letter-spacing:0px;color:#000;transform:scaleX(0.9);transform-origin:left 0;">Antal order</div>
<div class="t" style="right:346.00px;top:345.00px;font-size:10px;letter-spacing:0px;color:#000;transform:scaleX(0.92);transform-origin:right 0;">0</div>
<div class="t" style="right:189.00px;top:345.00px;font-size:10px;letter-spacing:0px;color:#000;transform:scaleX(0.92);transform-origin:right 0;">0</div>
<div class="t" style="right:110.00px;top:345.00px;font-size:10px;letter-spacing:0px;color:#000;transform:scaleX(0.92);transform-origin:right 0;">0</div>
<div class="t" style="left:454.00px;top:372.00px;font-size:10px;letter-spacing:0px;color:#000;transform:scaleX(0.9);transform-origin:left 0;">Antal fakturerade</div>
<div class="t" style="right:346.00px;top:372.00px;font-size:10px;letter-spacing:0px;color:#000;transform:scaleX(0.92);transform-origin:right 0;">87,00</div>
<div class="t" style="right:189.00px;top:372.00px;font-size:10px;letter-spacing:0px;color:#000;transform:scaleX(0.92);transform-origin:right 0;">0,00</div>
<div class="t" style="right:110.00px;top:372.00px;font-size:10px;letter-spacing:0px;color:#000;transform:scaleX(0.92);transform-origin:right 0;">256,00</div>
<div class="t" style="left:454.00px;top:385.00px;font-size:10px;letter-spacing:0px;color:#000;transform:scaleX(0.9);transform-origin:left 0;">Omsättning</div>
<div class="t" style="right:346.00px;top:385.00px;font-size:10px;letter-spacing:0px;color:#000;transform:scaleX(0.92);transform-origin:right 0;">2523,00</div>
<div class="t" style="right:267.70px;top:385.00px;font-size:10px;letter-spacing:0px;color:#000;transform:scaleX(0.92);transform-origin:right 0;">0,00</div>
<div class="t" style="right:189.00px;top:385.00px;font-size:10px;letter-spacing:0px;color:#000;transform:scaleX(0.92);transform-origin:right 0;">0,00</div>
<div class="t" style="right:110.00px;top:385.00px;font-size:10px;letter-spacing:0px;color:#000;transform:scaleX(0.92);transform-origin:right 0;">7235,00</div>
<div class="t" style="left:454.00px;top:399.00px;font-size:10px;letter-spacing:0px;color:#000;transform:scaleX(0.9);transform-origin:left 0;">Genomsnittspris</div>
<div class="t" style="right:346.00px;top:399.00px;font-size:10px;letter-spacing:0px;color:#000;transform:scaleX(0.92);transform-origin:right 0;">29,00</div>
<div class="t" style="right:189.00px;top:399.00px;font-size:10px;letter-spacing:0px;color:#000;transform:scaleX(0.92);transform-origin:right 0;">0,00</div>
<div class="t" style="right:110.00px;top:399.00px;font-size:10px;letter-spacing:0px;color:#000;transform:scaleX(0.92);transform-origin:right 0;">28,26</div>
<div class="t" style="right:346.00px;top:425.00px;font-size:10px;letter-spacing:0px;color:#000;font-weight:bold;transform:scaleX(0.85);transform-origin:right 0;">Antal</div>
<div class="t" style="right:267.70px;top:425.00px;font-size:10px;letter-spacing:0px;color:#000;font-weight:bold;transform:scaleX(0.85);transform-origin:right 0;">Summa</div>
<div class="t" style="left:454.00px;top:438.00px;font-size:10px;letter-spacing:0px;color:#000;transform:scaleX(0.9);transform-origin:left 0;">Lagerbehållning</div>
<div class="t" style="right:346.00px;top:438.00px;font-size:10px;letter-spacing:0px;color:#000;transform:scaleX(0.92);transform-origin:right 0;">-258,00</div>
<div class="t" style="right:267.70px;top:438.00px;font-size:10px;letter-spacing:0px;color:#000;transform:scaleX(0.92);transform-origin:right 0;">-4902,00</div>
<div class="t" style="left:454.00px;top:452.00px;font-size:10px;letter-spacing:0px;color:#000;transform:scaleX(0.9);transform-origin:left 0;">Orderreserv m/kredittorder</div>
<div class="t" style="right:346.00px;top:452.00px;font-size:10px;letter-spacing:0px;color:#000;transform:scaleX(0.92);transform-origin:right 0;">3,00</div>
<div class="t" style="right:267.70px;top:452.00px;font-size:10px;letter-spacing:0px;color:#000;transform:scaleX(0.92);transform-origin:right 0;">87,00</div>
<div class="r" style="left:458px;top:472.5px;width:76px;height:17.0px;background:#e1e1e1;border:1px solid #8e8e8e;"></div>
<div class="t" style="left:296.00px;width:400px;text-align:center;top:476.00px;font-size:10px;letter-spacing:-0.35px;color:#000;">Fakturarader</div>
<div class="r" style="left:541px;top:472.5px;width:76px;height:17.0px;background:#e1e1e1;border:1px solid #7eaedc;"></div>
<div class="t" style="left:379.00px;width:400px;text-align:center;top:476.00px;font-size:10px;letter-spacing:-0.35px;color:#000;">Kunder</div>
<div class="r" style="left:624px;top:472.5px;width:76px;height:17.0px;background:#e1e1e1;border:1px solid #8e8e8e;"></div>
<div class="t" style="left:462.00px;width:400px;text-align:center;top:476.00px;font-size:10px;letter-spacing:-0.35px;color:#000;">Inköpsorder</div>
<div class="r" style="left:707px;top:472.5px;width:77px;height:17.0px;background:#e1e1e1;border:1px solid #8e8e8e;"></div>
<div class="t" style="left:545.50px;width:400px;text-align:center;top:476.00px;font-size:10px;letter-spacing:-0.35px;color:#000;">Leverantörer</div>
<div class="r" style="left:905.5px;top:321.5px;width:69.5px;height:14.5px;background:#e1e1e1;border:1px solid #8e8e8e;"></div>
<div class="t" style="left:740.25px;width:400px;text-align:center;top:324.00px;font-size:9.5px;letter-spacing:0.1785714285714286px;color:#000;transform:scaleX(0.84);transform-origin:center 0;"><u>O</u>K</div>
<div class="r" style="left:905.5px;top:339px;width:69.5px;height:15px;background:#e1e1e1;border:1px solid #8e8e8e;"></div>
<div class="t" style="left:740.25px;width:400px;text-align:center;top:342.00px;font-size:9.5px;letter-spacing:0.1785714285714286px;color:#000;transform:scaleX(0.84);transform-origin:center 0;"><u>H</u>jälp</div>
<div class="r" style="left:905.5px;top:357px;width:69.5px;height:15px;background:#e1e1e1;border:1px solid #8e8e8e;"></div>
<div class="t" style="left:740.25px;width:400px;text-align:center;top:360.00px;font-size:9.5px;letter-spacing:0.1785714285714286px;color:#000;transform:scaleX(0.84);transform-origin:center 0;">Skriv <u>u</u>t</div>
<div class="r" style="left:600px;top:501px;width:255px;height:184px;background:#f0f0f0;border:1px solid #3c4148;"></div>
<div class="r" style="left:601px;top:502px;width:253px;height:17.5px;background:#a7c2de;"></div>
<div class="r" style="left:601px;top:502px;width:1.5px;height:182px;background:#a7c2de;"></div>
<div class="r" style="left:852.5px;top:502px;width:1.5px;height:182px;background:#a7c2de;"></div>
<div class="r" style="left:601px;top:682.5px;width:253px;height:1.5px;background:#a7c2de;"></div>
<svg style="left:604.7px;top:505.67px" width="10.6" height="11.66" viewBox="0 0 20 22"><defs><radialGradient id="mg" cx="50%" cy="40%" r="60%"><stop offset="0" stop-color="#c8d8f4"/><stop offset="0.6" stop-color="#5f82c8"/><stop offset="1" stop-color="#22357e"/></radialGradient></defs><ellipse cx="10" cy="11" rx="9.6" ry="10.6" fill="url(#mg)"/><path d="M4.3 17.5 V7 Q4.3 4.2 7 4.5 L10 9.5 L13 4.5 Q15.7 4.2 15.7 7 V17.5 H13 V9.5 L10 13.5 L7 9.5 V17.5 Z" fill="#f4f7fd"/></svg>
<div class="t" style="left:710.00px;top:507.00px;font-size:11.5px;letter-spacing:-0.1px;color:#1a1a2a;">Kunder</div>
<div class="r" style="left:838px;top:505px;width:13px;height:12.5px;background:#d7644c;border:1px solid #b04a38;"></div>
<svg style="left:841.5px;top:508px" width="7" height="7" viewBox="0 0 7 7"><path d="M1 1 L6 6 M6 1 L1 6" stroke="#000" stroke-width="2"/></svg>
<svg style="left:608.5px;top:524px" width="10" height="11" viewBox="0 0 10 11"><path d="M0.5 0.5 H5.5 L8.5 3.5 V10.5 H0.5 Z" fill="#fafafa" stroke="#8a8a8a"/><path d="M5.5 0.5 V3.5 H8.5" fill="none" stroke="#8a8a8a" stroke-width="0.8"/><path d="M0.5 10.5 H8.5 V4" fill="none" stroke="#5a5a5a"/></svg>
<svg style="left:625px;top:524.5px" width="12" height="10" viewBox="0 0 12 10"><path d="M0.5 1.5 H7 L9 3.5 V9.5 H0.5 Z" fill="#ececec" stroke="#7a7a7a"/><path d="M2 4 H6 M2 6 H7 M2 8 H5" stroke="#9a9a9a" stroke-width="0.8"/><path d="M4 8 L10.5 0.8 L11.5 1.8 L5 8.8 Z" fill="#c8c8c8" stroke="#6a6a6a" stroke-width="0.6"/></svg>
<svg style="left:640.5px;top:524.5px" width="10" height="10" viewBox="0 0 10 10"><path d="M0.8 0.8 L9.2 9.2 M9.2 0.8 L0.8 9.2" stroke="#111" stroke-width="1.4"/></svg>
<div class="r" style="left:656.5px;top:524px;width:1.0px;height:12px;background:#b4b4b4;"></div>
<div class="r" style="left:657.5px;top:524px;width:1.0px;height:12px;background:#fafafa;"></div>
<svg style="left:662.5px;top:524.5px" width="11" height="11" viewBox="0 0 11 11"><path d="M0.6 0.6 H10.4 L6.3 5.2 V9.8 L4.2 8.6 V5.2 Z" fill="#f4f4f4" stroke="#6a6a6a" stroke-width="1.2" stroke-linejoin="round"/><path d="M0.6 0.9 H10.4" stroke="#6a6a6a" stroke-width="1.6"/></svg>
<svg style="left:678.5px;top:524.5px" width="11" height="11" viewBox="0 0 11 11"><path d="M0.6 0.6 H10.4 L6.3 5.2 V9.8 L4.2 8.6 V5.2 Z" fill="#f4f4f4" stroke="#6a6a6a" stroke-width="1.2" stroke-linejoin="round"/><path d="M0.6 0.9 H10.4" stroke="#6a6a6a" stroke-width="1.6"/></svg>
<div class="r" style="left:694.5px;top:524px;width:1.0px;height:12px;background:#b4b4b4;"></div>
<div class="r" style="left:695.5px;top:524px;width:1.0px;height:12px;background:#fafafa;"></div>
<svg style="left:700px;top:524.5px" width="12" height="11" viewBox="0 0 12 11"><defs><linearGradient id="pr" x1="0" y1="0" x2="0" y2="1"><stop offset="0" stop-color="#dfe6f0"/><stop offset="1" stop-color="#7d8ca8"/></linearGradient></defs><path d="M3 0.5 H9.5 L10 4.5 H2.5 Z" fill="#fff" stroke="#7a88a0" stroke-width="0.8"/><path d="M0.5 4.5 H11.5 V9.5 Q11.5 10.5 10.5 10.5 H1.5 Q0.5 10.5 0.5 9.5 Z" fill="url(#pr)" stroke="#56647e" stroke-width="0.9"/><rect x="2" y="6.5" width="5.5" height="1.6" fill="#f4f6fa"/><rect x="8" y="6.8" width="2.4" height="2" fill="#18c018"/></svg>
<svg style="left:717px;top:524.5px" width="11" height="11" viewBox="0 0 11 11"><circle cx="5.5" cy="5.5" r="5.2" fill="#5a86da" stroke="#3a62c0" stroke-width="0.7"/><circle cx="5.5" cy="5.5" r="3.7" fill="#3f6cc8" stroke="#dce8fb" stroke-width="0.9"/><text x="5.6" y="8.3" text-anchor="middle" font-size="7" font-weight="bold" font-family="Liberation Sans" fill="#fff">?</text></svg>
<svg style="left:733px;top:524px" width="12" height="12" viewBox="0 0 12 12"><rect x="1.5" y="0.5" width="6" height="10.5" fill="#e4e8ee" stroke="#7a8494" stroke-width="0.8"/><path d="M0.5 1.2 L4.8 2.6 V11.8 L0.5 10.5 Z" fill="#e8a828" stroke="#a06c10" stroke-width="0.7"/><path d="M7.5 5.5 H11 M9.6 3.8 L11.3 5.5 L9.6 7.2" fill="none" stroke="#3a78e0" stroke-width="1.4"/></svg>
<div class="r" style="left:605px;top:543px;width:246px;height:100px;background:#fff;border:1px solid #a0a0a0;"></div>
<div class="r" style="left:606px;top:544px;width:231px;height:11px;background:linear-gradient(#fff,#f6f6f6);"></div>
<div class="r" style="left:606px;top:555px;width:231px;height:1px;background:#6a6a6a;"></div>
<div class="r" style="left:644px;top:544px;width:1px;height:11px;background:#dcdcdc;"></div>
<div class="r" style="left:755.5px;top:544px;width:1.0px;height:11px;background:#dcdcdc;"></div>
<div class="r" style="left:793.5px;top:544px;width:1.0px;height:11px;background:#dcdcdc;"></div>
<div class="t" style="left:606.50px;top:544.00px;font-size:9.5px;letter-spacing:0px;color:#000;font-weight:bold;transform:scaleX(0.9);transform-origin:left 0;">Kontaktn</div>
<div class="t" style="left:499.50px;width:400px;text-align:center;top:544.00px;font-size:9.5px;letter-spacing:0px;color:#222;transform:scaleX(0.84);transform-origin:center 0;">Kontaktnamn</div>
<div class="t" style="left:574.50px;width:400px;text-align:center;top:544.00px;font-size:9.5px;letter-spacing:0px;color:#222;transform:scaleX(0.86);transform-origin:center 0;">Antal</div>
<div class="t" style="left:615.00px;width:400px;text-align:center;top:544.00px;font-size:9.5px;letter-spacing:0px;color:#222;transform:scaleX(0.86);transform-origin:center 0;">Pris</div>
<div class="t" style="left:607.80px;top:557.00px;font-size:9.5px;letter-spacing:0px;color:#000;transform:scaleX(0.82);transform-origin:left 0;">141002</div>
<div class="t" style="left:645.5px;top:557px;width:134.1px;overflow:hidden;font-size:9.5px;color:#000;transform:scaleX(0.82);transform-origin:left 0;">Foodhouse</div>
<div class="t" style="left:757.00px;top:557.00px;font-size:9.5px;letter-spacing:0px;color:#000;transform:scaleX(0.82);transform-origin:left 0;">53</div>
<div class="t" style="right:164.00px;top:557.00px;font-size:9.5px;letter-spacing:0px;color:#000;transform:scaleX(0.82);transform-origin:right 0;">1 537,00</div>
<div class="t" style="left:607.80px;top:569.00px;font-size:9.5px;letter-spacing:0px;color:#000;transform:scaleX(0.82);transform-origin:left 0;">140720</div>
<div class="t" style="left:645.5px;top:569px;width:134.1px;overflow:hidden;font-size:9.5px;color:#000;transform:scaleX(0.82);transform-origin:left 0;">Fram Linné</div>
<div class="t" style="left:757.00px;top:569.00px;font-size:9.5px;letter-spacing:0px;color:#000;transform:scaleX(0.82);transform-origin:left 0;">5</div>
<div class="t" style="right:164.00px;top:569.00px;font-size:9.5px;letter-spacing:0px;color:#000;transform:scaleX(0.82);transform-origin:right 0;">145,00</div>
<div class="r" style="left:606px;top:579.5px;width:231px;height:11.5px;background:#000080;"></div>
<div class="t" style="left:607.80px;top:580.00px;font-size:9.5px;letter-spacing:0px;color:#fff;transform:scaleX(0.82);transform-origin:left 0;">140722</div>
<div class="t" style="left:645.5px;top:580px;width:134.1px;overflow:hidden;font-size:9.5px;color:#fff;transform:scaleX(0.82);transform-origin:left 0;">Gröna Boden AB</div>
<div class="t" style="left:757.00px;top:580.00px;font-size:9.5px;letter-spacing:0px;color:#fff;transform:scaleX(0.82);transform-origin:left 0;">3</div>
<div class="t" style="right:164.00px;top:580.00px;font-size:9.5px;letter-spacing:0px;color:#fff;transform:scaleX(0.82);transform-origin:right 0;">87,00</div>
<div class="t" style="left:607.80px;top:592.00px;font-size:9.5px;letter-spacing:0px;color:#000;transform:scaleX(0.82);transform-origin:left 0;">180417</div>
<div class="t" style="left:645.5px;top:592px;width:134.1px;overflow:hidden;font-size:9.5px;color:#000;transform:scaleX(0.82);transform-origin:left 0;">Göta Hotell / Svecia Travels AB</div>
<div class="t" style="left:757.00px;top:592.00px;font-size:9.5px;letter-spacing:0px;color:#000;transform:scaleX(0.82);transform-origin:left 0;">35</div>
<div class="t" style="right:164.00px;top:592.00px;font-size:9.5px;letter-spacing:0px;color:#000;transform:scaleX(0.82);transform-origin:right 0;">1 015,00</div>
<div class="t" style="left:607.80px;top:604.00px;font-size:9.5px;letter-spacing:0px;color:#000;transform:scaleX(0.82);transform-origin:left 0;">140721</div>
<div class="t" style="left:645.5px;top:604px;width:134.1px;overflow:hidden;font-size:9.5px;color:#000;transform:scaleX(0.82);transform-origin:left 0;">Kvilles Pastahouse</div>
<div class="t" style="left:757.00px;top:604.00px;font-size:9.5px;letter-spacing:0px;color:#000;transform:scaleX(0.82);transform-origin:left 0;">200</div>
<div class="t" style="right:164.00px;top:604.00px;font-size:9.5px;letter-spacing:0px;color:#000;transform:scaleX(0.82);transform-origin:right 0;">5 611,00</div>
<div class="t" style="left:607.80px;top:616.00px;font-size:9.5px;letter-spacing:0px;color:#000;transform:scaleX(0.82);transform-origin:left 0;">140740</div>
<div class="t" style="left:645.5px;top:616px;width:134.1px;overflow:hidden;font-size:9.5px;color:#000;transform:scaleX(0.82);transform-origin:left 0;">Life Uddevalla City</div>
<div class="t" style="left:757.00px;top:616.00px;font-size:9.5px;letter-spacing:0px;color:#000;transform:scaleX(0.82);transform-origin:left 0;">2</div>
<div class="t" style="right:164.00px;top:616.00px;font-size:9.5px;letter-spacing:0px;color:#000;transform:scaleX(0.82);transform-origin:right 0;">58,00</div>
<div class="t" style="left:607.80px;top:627.00px;font-size:9.5px;letter-spacing:0px;color:#000;transform:scaleX(0.82);transform-origin:left 0;">170702</div>
<div class="t" style="left:645.5px;top:627px;width:134.1px;overflow:hidden;font-size:9.5px;color:#000;transform:scaleX(0.82);transform-origin:left 0;">Naturligtvis - Stationshuset Hälk</div>
<div class="t" style="left:757.00px;top:627.00px;font-size:9.5px;letter-spacing:0px;color:#000;transform:scaleX(0.82);transform-origin:left 0;">11</div>
<div class="t" style="right:164.00px;top:627.00px;font-size:9.5px;letter-spacing:0px;color:#000;transform:scaleX(0.82);transform-origin:right 0;">319,00</div>
<div class="t" style="left:607.80px;top:639.00px;font-size:9.5px;letter-spacing:0px;color:#000;transform:scaleX(0.82);transform-origin:left 0;">180477</div>
<div class="t" style="left:645.5px;top:639px;width:134.1px;overflow:hidden;font-size:9.5px;color:#000;transform:scaleX(0.82);transform-origin:left 0;">Vegan Gourmet AB</div>
<div class="t" style="left:757.00px;top:639.00px;font-size:9.5px;letter-spacing:0px;color:#000;transform:scaleX(0.82);transform-origin:left 0;">10</div>
<div class="t" style="right:164.00px;top:639.00px;font-size:9.5px;letter-spacing:0px;color:#000;transform:scaleX(0.82);transform-origin:right 0;">240,00</div>
<div class="r" style="left:606px;top:642px;width:244px;height:1px;background:#a0a0a0;"></div>
<div class="r" style="left:602.5px;top:643px;width:250.0px;height:2px;background:#f0f0f0;"></div>
<div class="r" style="left:837px;top:544px;width:13px;height:98px;background:#f0f0f0;"></div>
<div class="r" style="left:838px;top:559px;width:11px;height:64.5px;background:#cdcdcd;"></div>
<svg style="left:840px;top:546.5px" width="7" height="5" viewBox="0 0 7 5"><path d="M0.5 4 L3.5 1 L6.5 4" fill="none" stroke="#606060" stroke-width="1.2"/></svg>
<svg style="left:840px;top:633.5px" width="7" height="5" viewBox="0 0 7 5"><path d="M0.5 1 L3.5 4 L6.5 1" fill="none" stroke="#606060" stroke-width="1.2"/></svg>
<svg style="left:840px;top:588px" width="7" height="6" viewBox="0 0 7 6"><path d="M0 0.5 H7 M0 2.5 H7 M0 4.5 H7" stroke="#606060" stroke-width="1"/></svg>
<div class="r" style="left:605px;top:645px;width:246.5px;height:15px;background:#fff;border:1px solid #7eb4ea;"></div>
<div class="r" style="left:606.5px;top:647px;width:157.5px;height:9.5px;background:#3399ff;"></div>
<div class="t" style="left:607.50px;top:647.00px;font-size:9.5px;letter-spacing:0px;color:#fff;transform:scaleX(0.82);transform-origin:left 0;">140722</div>
<div class="r" style="left:615.5px;top:664px;width:72.5px;height:15px;background:#e1e1e1;border:1px solid #707070;"></div>
<div class="t" style="left:451.75px;width:400px;text-align:center;top:667.00px;font-size:9.5px;letter-spacing:0.2976190476190476px;color:#000;transform:scaleX(0.84);transform-origin:center 0;"><u>O</u>K</div>
<div class="r" style="left:691px;top:664px;width:73px;height:15px;background:#e1e1e1;border:1px solid #707070;"></div>
<div class="t" style="left:527.50px;width:400px;text-align:center;top:667.00px;font-size:9.5px;letter-spacing:0.2976190476190476px;color:#000;transform:scaleX(0.84);transform-origin:center 0;"><u>A</u>vbryt</div>
<div class="r" style="left:767px;top:664px;width:72.5px;height:15px;background:#e1e1e1;border:1px solid #707070;"></div>
<div class="t" style="left:603.25px;width:400px;text-align:center;top:667.00px;font-size:9.5px;letter-spacing:0.2976190476190476px;color:#000;transform:scaleX(0.84);transform-origin:center 0;"><u>H</u>jälp</div>
</body></html>
